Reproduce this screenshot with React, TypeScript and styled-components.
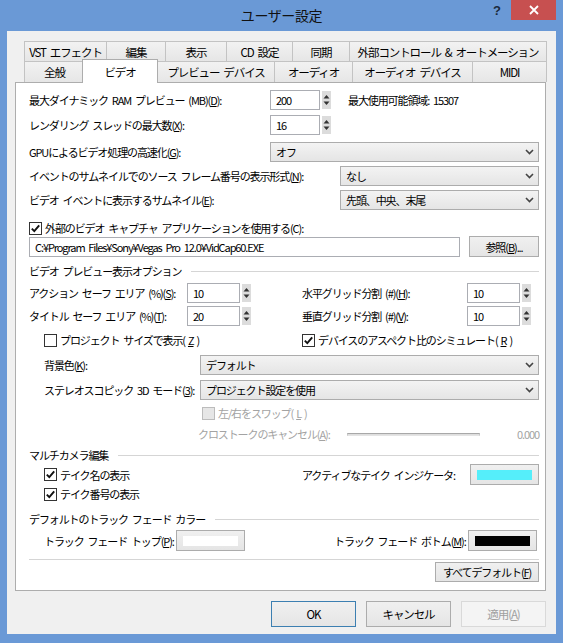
import React from "react";
import styled, { createGlobalStyle } from "styled-components";

const GlobalStyle = createGlobalStyle`
  html, body {
    margin: 0;
    padding: 0;
    background: #6a99d6;
  }
  * {
    box-sizing: border-box;
  }
`;

const Window = styled.div`
  width: 563px;
  height: 643px;
  background: #6a99d6;
  padding: 0 7px 9px 7px;
  display: flex;
  flex-direction: column;
  font-family: "Noto Sans CJK JP", "Noto Sans", sans-serif;
  font-size: 11px;
  letter-spacing: -1.1px;
  word-spacing: 2.5px;
  color: #000;
`;

const TitleBar = styled.div`
  height: 31px;
  display: grid;
  grid-template-columns: 1fr auto 1fr;
  align-items: start;
`;

const Title = styled.div`
  grid-column: 2;
  padding-top: 5px;
  font-size: 14px;
  letter-spacing: -0.4px;
  color: #111;
`;

const TitleControls = styled.div`
  grid-column: 3;
  justify-self: end;
  display: flex;
`;

const HelpButton = styled.div`
  width: 28px;
  height: 20px;
  display: flex;
  align-items: center;
  justify-content: center;
  font-family: "Liberation Sans", sans-serif;
  font-weight: bold;
  font-size: 13px;
  letter-spacing: 0;
  color: #1b2a3c;
`;

const CloseButton = styled.div`
  width: 45px;
  height: 20px;
  background: #c75050;
  display: flex;
  align-items: center;
  justify-content: center;
`;

const Client = styled.div`
  flex: 1;
  background: #f0f0f0;
  padding: 10px 10px 0 8px;
  display: flex;
  flex-direction: column;
`;

const TabRow = styled.div<{ $h: number }>`
  display: flex;
  height: ${(p) => p.$h}px;
  padding-left: 9px;
  flex-shrink: 0;
`;

const Tab = styled.div<{ $w?: number; $active?: boolean }>`
  ${(p) => (p.$w ? `width: ${p.$w + (p.$active ? 4 : 0)}px; flex: none;` : `flex: 1;`)}
  display: flex;
  align-items: center;
  justify-content: center;
  white-space: nowrap;
  font-size: 11.5px;
  border: 1px solid #c3c3c3;
  border-bottom: none;
  margin-right: -1px;
  background: linear-gradient(#f2f2f2, #e6e6e6);
  ${(p) =>
    p.$active &&
    `
    background: #fff;
    margin: -2px -1px 0 -2px;
    height: calc(100% + 3px);
    position: relative;
    z-index: 1;
    border-color: #adadad;
  `}
`;

const Panel = styled.div`
  height: 509px;
  background: #fff;
  border: 1px solid #adadad;
  padding: 7px 6px 0 13px;
  display: flex;
  flex-direction: column;
  flex-shrink: 0;
`;

const Row = styled.div<{ $h?: number; $mt?: number; $pl?: number }>`
  display: flex;
  align-items: center;
  flex-shrink: 0;
  height: ${(p) => p.$h ?? 20}px;
  margin-top: ${(p) => p.$mt ?? 0}px;
  padding-left: ${(p) => p.$pl ?? 0}px;
`;

const Half = styled.div<{ $pl?: number }>`
  width: 273px;
  flex-shrink: 0;
  display: flex;
  align-items: center;
  padding-left: ${(p) => p.$pl ?? 0}px;
`;

const Rest = styled.div`
  flex: 1;
  display: flex;
  align-items: center;
`;

const Label = styled.span<{ $w?: number; $muted?: boolean; $ml?: string }>`
  white-space: nowrap;
  flex-shrink: 0;
  ${(p) => (p.$w ? `width: ${p.$w}px;` : "")}
  ${(p) => (p.$ml ? `margin-left: ${p.$ml};` : "")}
  color: ${(p) => (p.$muted ? "#a3a3a3" : "#000")};
`;

const Field = styled.div<{ $w?: number }>`
  ${(p) => (p.$w ? `width: ${p.$w}px; flex: none;` : `flex: 1;`)}
  height: 20px;
  border: 1px solid #abadb3;
  background: #fff;
  padding: 0 5px;
  line-height: 18px;
  white-space: nowrap;
  overflow: hidden;
`;

const SpinBox = styled.div`
  width: 9px;
  height: 18px;
  margin-left: 2px;
  background: #dcdcdc;
  display: flex;
  align-items: center;
  justify-content: center;
  flex-shrink: 0;
`;

const SelectBox = styled.div<{ $w?: number }>`
  ${(p) => (p.$w ? `width: ${p.$w}px; flex: none;` : `flex: 1;`)}
  height: 20px;
  border: 1px solid #acacac;
  background: linear-gradient(#f3f3f3, #e5e5e5);
  display: flex;
  align-items: center;
  padding-left: 5px;
  white-space: nowrap;
`;

const Chevron = styled.span`
  margin-left: auto;
  width: 17px;
  height: 18px;
  display: flex;
  align-items: center;
  justify-content: center;
`;

const CheckWrap = styled.label<{ $disabled?: boolean }>`
  display: flex;
  align-items: center;
  gap: 3px;
  white-space: nowrap;
  color: ${(p) => (p.$disabled ? "#a3a3a3" : "#000")};
`;

const Box = styled.span<{ $disabled?: boolean }>`
  width: 13px;
  height: 13px;
  border: 1px solid ${(p) => (p.$disabled ? "#bcbcbc" : "#333")};
  background: ${(p) => (p.$disabled ? "#e6e6e6" : "#fff")};
  display: flex;
  align-items: center;
  justify-content: center;
  flex-shrink: 0;
`;

const Button = styled.div<{ $w: number; $h?: number; $default?: boolean; $disabled?: boolean; $ml?: string }>`
  width: ${(p) => p.$w}px;
  height: ${(p) => p.$h ?? 21}px;
  flex-shrink: 0;
  ${(p) => (p.$ml ? `margin-left: ${p.$ml};` : "")}
  display: flex;
  align-items: center;
  justify-content: center;
  white-space: nowrap;
  border: 1px solid ${(p) => (p.$default ? "#3c7fb1" : p.$disabled ? "#d9d9d9" : "#acacac")};
  background: ${(p) => (p.$disabled ? "#f4f4f4" : "linear-gradient(#f0f0f0, #e5e5e5)")};
  color: ${(p) => (p.$disabled ? "#a0a0a0" : "#000")};
`;

const Swatch = styled.span<{ $color: string }>`
  width: 55px;
  height: 10px;
  background: ${(p) => p.$color};
`;

const GroupLine = styled.span`
  flex: 1;
  height: 1px;
  margin-left: 10px;
  background: #d5d5d5;
`;

const Separator = styled.div`
  height: 1px;
  background: #d5d5d5;
  margin-top: 8px;
  flex-shrink: 0;
`;

const Slider = styled.span`
  width: 133px;
  height: 3px;
  flex-shrink: 0;
  border-top: 1px solid #a8a8a8;
  border-bottom: 1px solid #e4e4e4;
  border-left: 1px solid #c8c8c8;
  border-right: 1px solid #c8c8c8;
  background: #dedede;
`;

const Footer = styled.div`
  display: flex;
  justify-content: flex-end;
  gap: 10px;
  margin-top: 10px;
  font-size: 11.5px;
`;

const Spin = () => (
  <SpinBox>
    <svg width="9" height="18" viewBox="0 0 9 18">
      <polygon points="1.5,7.5 7.5,7.5 4.5,4" fill="#333" />
      <polygon points="1.5,10.5 7.5,10.5 4.5,14" fill="#333" />
    </svg>
  </SpinBox>
);

const Select = ({ children, w }: { children: React.ReactNode; w?: number }) => (
  <SelectBox $w={w}>
    {children}
    <Chevron>
      <svg width="9" height="6" viewBox="0 0 9 6">
        <polyline points="1,1 4.5,4.5 8,1" fill="none" stroke="#444" strokeWidth="1.6" />
      </svg>
    </Chevron>
  </SelectBox>
);

const Check = ({
  children,
  checked,
  disabled,
}: {
  children: React.ReactNode;
  checked?: boolean;
  disabled?: boolean;
}) => (
  <CheckWrap $disabled={disabled}>
    <Box $disabled={disabled}>
      {checked && (
        <svg width="11" height="11" viewBox="0 0 11 11">
          <polyline points="1.8,5.6 4.3,8.2 9.2,2.4" fill="none" stroke="#111" strokeWidth="1.9" />
        </svg>
      )}
    </Box>
    {children}
  </CheckWrap>
);

const Group = ({ children, mt }: { children: React.ReactNode; mt: number }) => (
  <Row $h={16} $mt={mt}>
    <Label>{children}</Label>
    <GroupLine />
  </Row>
);

const ColorButton = ({ color, ml }: { color: string; ml?: string }) => (
  <Button $w={69} $ml={ml}>
    <Swatch $color={color} />
  </Button>
);

export default function App() {
  return (
    <>
      <GlobalStyle />
      <Window>
        <TitleBar>
          <Title>ユーザー設定</Title>
          <TitleControls>
            <HelpButton>?</HelpButton>
            <CloseButton>
              <svg width="10" height="10" viewBox="0 0 10 10">
                <path d="M1 1 L9 9 M9 1 L1 9" stroke="#fff" strokeWidth="1.8" />
              </svg>
            </CloseButton>
          </TitleControls>
        </TitleBar>

        <Client>
          <TabRow $h={20}>
            <Tab $w={83}>VST エフェクト</Tab>
            <Tab $w={60}>編集</Tab>
            <Tab $w={62}>表示</Tab>
            <Tab $w={67}>CD 設定</Tab>
            <Tab $w={58}>同期</Tab>
            <Tab>外部コントロール &amp; オートメーション</Tab>
          </TabRow>
          <TabRow $h={21}>
            <Tab $w={61}>全般</Tab>
            <Tab $w={72} $active>
              ビデオ
            </Tab>
            <Tab $w={118}>プレビュー デバイス</Tab>
            <Tab $w={79}>オーディオ</Tab>
            <Tab $w={121}>オーディオ デバイス</Tab>
            <Tab>MIDI</Tab>
          </TabRow>

          <Panel>
            <Row>
              <Label $w={241}>
                最大ダイナミック RAM プレビュー (MB)(<u>D</u>):
              </Label>
              <Field $w={50}>200</Field>
              <Spin />
              <Label $ml="17px">最大使用可能領域: 15307</Label>
            </Row>
            <Row $mt={5}>
              <Label $w={241}>
                レンダリング スレッドの最大数(<u>X</u>):
              </Label>
              <Field $w={50}>16</Field>
              <Spin />
            </Row>
            <Row $mt={7}>
              <Label $w={241}>
                GPUによるビデオ処理の高速化(<u>G</u>):
              </Label>
              <Select>オフ</Select>
            </Row>
            <Row $mt={4}>
              <Label $w={311}>
                イベントのサムネイルでのソース フレーム番号の表示形式(<u>N</u>):
              </Label>
              <Select>なし</Select>
            </Row>
            <Row $mt={4}>
              <Label $w={311}>
                ビデオ イベントに表示するサムネイル(<u>E</u>):
              </Label>
              <Select>先頭、中央、末尾</Select>
            </Row>
            <Row $h={16} $mt={10}>
              <Check checked>外部のビデオ キャプチャ アプリケーションを使用する(C):</Check>
            </Row>
            <Row $h={21}>
              <Field>C:¥Program Files¥Sony¥Vegas Pro 12.0¥VidCap60.EXE</Field>
              <Button $w={70} $ml="9px">
                参照(<u>B</u>)...
              </Button>
            </Row>

            <Group mt={6}>ビデオ プレビュー表示オプション</Group>
            <Row $mt={4}>
              <Half>
                <Label $w={158}>
                  アクション セーフ エリア (%)(<u>S</u>):
                </Label>
                <Field $w={53}>10</Field>
                <Spin />
              </Half>
              <Rest>
                <Label $w={165}>
                  水平グリッド分割 (#)(<u>H</u>):
                </Label>
                <Field $w={53}>10</Field>
                <Spin />
              </Rest>
            </Row>
            <Row $mt={3}>
              <Half>
                <Label $w={158}>
                  タイトル セーフ エリア (%)(<u>T</u>):
                </Label>
                <Field $w={53}>20</Field>
                <Spin />
              </Half>
              <Rest>
                <Label $w={165}>
                  垂直グリッド分割 (#)(<u>V</u>):
                </Label>
                <Field $w={53}>10</Field>
                <Spin />
              </Rest>
            </Row>
            <Row $h={16} $mt={6}>
              <Half $pl={15}>
                <Check>
                  プロジェクト サイズで表示(<u>Z</u>)
                </Check>
              </Half>
              <Rest>
                <Check checked>
                  デバイスのアスペクト比のシミュレート(<u>R</u>)
                </Check>
              </Rest>
            </Row>
            <Row $mt={7} $pl={15}>
              <Label $w={156}>
                背景色(<u>K</u>):
              </Label>
              <Select>デフォルト</Select>
            </Row>
            <Row $mt={5} $pl={15}>
              <Label $w={156}>
                ステレオスコピック 3D モード(<u>3</u>):
              </Label>
              <Select>プロジェクト設定を使用</Select>
            </Row>
            <Row $h={16} $mt={5} $pl={173}>
              <Check disabled>
                左/右をスワップ(<u>L</u>)
              </Check>
            </Row>
            <Row $h={16} $mt={5} $pl={169}>
              <Label $w={149} $muted>
                クロストークのキャンセル(<u>A</u>):
              </Label>
              <Slider />
              <Label $muted $ml="auto">
                0.000
              </Label>
            </Row>

            <Group mt={5}>マルチカメラ編集</Group>
            <Row $h={21} $mt={1}>
              <Half $pl={15}>
                <Check checked>テイク名の表示</Check>
              </Half>
              <Rest>
                <Label>アクティブなテイク インジケータ:</Label>
                <ColorButton color="#55eefa" ml="auto" />
              </Rest>
            </Row>
            <Row $h={16} $mt={1} $pl={15}>
              <Check checked>テイク番号の表示</Check>
            </Row>

            <Group mt={9}>デフォルトのトラック フェード カラー</Group>
            <Row $h={21} $mt={3} $pl={15}>
              <Label $w={132}>
                トラック フェード トップ(<u>P</u>):
              </Label>
              <ColorButton color="#ffffff" />
              <Label $w={134} $ml="auto">
                トラック フェード ボトム(<u>M</u>):
              </Label>
              <ColorButton color="#000000" />
              <Label $w={2} />
            </Row>
            <Separator />
            <Row $mt={2}>
              <Button $w={104} $h={20} $ml="auto">
                すべてデフォルト(<u>F</u>)
              </Button>
            </Row>
          </Panel>

          <Footer>
            <Button $w={85} $h={26} $default>
              OK
            </Button>
            <Button $w={85} $h={26}>
              キャンセル
            </Button>
            <Button $w={85} $h={26} $disabled>
              適用(<u>A</u>)
            </Button>
          </Footer>
        </Client>
      </Window>
    </>
  );
}
